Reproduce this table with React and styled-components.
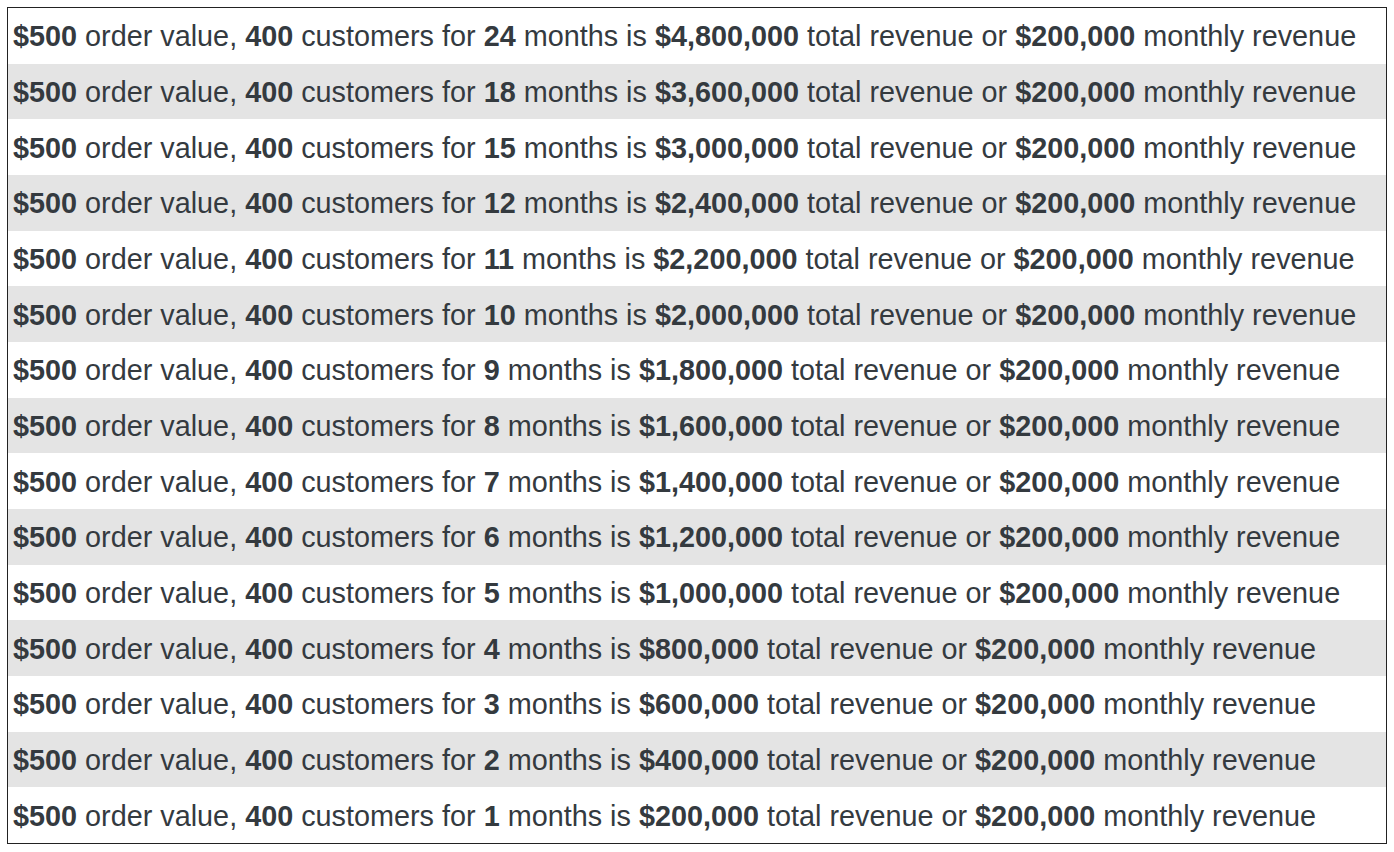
import React from 'react';
import styled, { createGlobalStyle } from 'styled-components';

const GlobalStyle = createGlobalStyle`
  body {
    margin: 0;
    background: #fff;
    font-family: "Liberation Sans", Arial, sans-serif;
  }
`;

const Table = styled.div`
  margin: 7px 0 0 7px;
  width: 1378px;
  border: 1px solid #222;
  display: flex;
  flex-direction: column;
`;

const Row = styled.div`
  box-sizing: border-box;
  height: 55.67px;
  display: flex;
  align-items: center;
  padding: 2px 0 0 5px;
  background: ${props => (props.striped ? '#e4e4e4' : '#fff')};
  color: #343a3f;
  font-size: 28.8px;
  white-space: nowrap;
`;

const months = [24, 18, 15, 12, 11, 10, 9, 8, 7, 6, 5, 4, 3, 2, 1];

const fmt = n => '$' + n.toLocaleString('en-US');

class App extends React.PureComponent {
  render() {
    return (
      <>
        <GlobalStyle />
        <Table>
          {months.map((m, key) => (
            <Row key={key} striped={key % 2 === 1}>
              <span>
                <b>$500</b> order value, <b>400</b> customers for <b>{m}</b> months is{' '}
                <b>{fmt(m * 200000)}</b> total revenue or <b>$200,000</b> monthly revenue
              </span>
            </Row>
          ))}
        </Table>
      </>
    );
  }
}

export default App;
